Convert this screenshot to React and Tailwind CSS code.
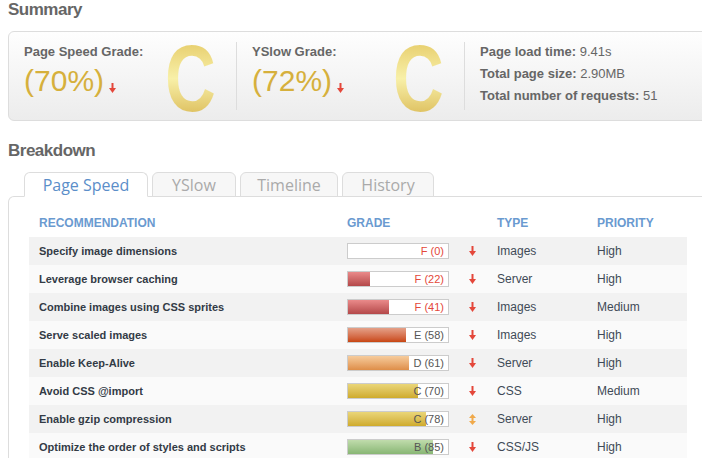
import React from "react";

const rows = [
  { name: "Specify image dimensions", grade: "F", score: 0, type: "Images", priority: "High" },
  { name: "Leverage browser caching", grade: "F", score: 22, type: "Server", priority: "High" },
  { name: "Combine images using CSS sprites", grade: "F", score: 41, type: "Images", priority: "Medium" },
  { name: "Serve scaled images", grade: "E", score: 58, type: "Images", priority: "High" },
  { name: "Enable Keep-Alive", grade: "D", score: 61, type: "Server", priority: "High" },
  { name: "Avoid CSS @import", grade: "C", score: 70, type: "CSS", priority: "Medium" },
  { name: "Enable gzip compression", grade: "C", score: 78, type: "Server", priority: "High", trend: "same" },
  { name: "Optimize the order of styles and scripts", grade: "B", score: 85, type: "CSS/JS", priority: "High" },
];

const fillStyle = {
  F: "bg-linear-to-b from-[#ea8a8a] to-[#b4484a]",
  E: "bg-linear-to-b from-[#e4a088] to-[#c8460e]",
  D: "bg-linear-to-b from-[#f6cc9c] to-[#de8e48]",
  C: "bg-linear-to-b from-[#ead678] to-[#cfab2a]",
  B: "bg-linear-to-b from-[#c0dcac] to-[#88b674]",
};

const tabs = [
  { label: "Page Speed", w: "w-[124px]", active: true },
  { label: "YSlow", w: "w-[84px]" },
  { label: "Timeline", w: "w-[98px]" },
  { label: "History", w: "w-[92px]" },
];

function DownArrow({ className = "" }) {
  return (
    <svg width="7" height="10" viewBox="0 0 7 10" className={className}>
      <rect x="2.5" y="0" width="2" height="6" fill="#e4473a" />
      <polygon points="0,5 7,5 3.5,10" fill="#e4473a" />
    </svg>
  );
}

function SameArrow() {
  return (
    <svg width="7" height="11" viewBox="0 0 7 11">
      <polygon points="0,4 7,4 3.5,0" fill="#f0a94a" />
      <rect x="2.5" y="3" width="2" height="5" fill="#f0a94a" />
      <polygon points="0,7 7,7 3.5,11" fill="#f0a94a" />
    </svg>
  );
}

function Grade({ label, pct }) {
  return (
    <div className="flex">
      <div className="w-[228px] pl-[15px] pt-[12px] flex">
        <div className="w-[141px]">
          <div className="text-[13px] leading-[16px] font-bold text-[#666]">{label}</div>
          <div className="mt-[4px] flex items-end">
            <span className="text-[30px] leading-[34px] text-[#d6b03c]">({pct}%)</span>
            <DownArrow className="ml-[5px] mb-[5px]" />
          </div>
        </div>
        <div className="w-[44px] -mt-[13px]">
          <span className="inline-block origin-left scale-x-[0.74] text-[95px] leading-none font-bold bg-linear-to-b from-[#e2c458] via-[#f8f0a8] to-[#d5b143] bg-clip-text text-transparent">
            C
          </span>
        </div>
      </div>
    </div>
  );
}

export default function App() {
  return (
    <div className="w-[702px] h-[458px] overflow-hidden bg-white font-['Liberation_Sans',Arial,sans-serif]">
      <div className="w-[710px] pl-[8px]">
        <h2 className="text-[17px] leading-[20px] font-bold tracking-[-0.5px] text-[#666]">Summary</h2>

        {/* summary box */}
        <div className="mt-[11px] h-[90px] w-[720px] flex border border-[#ddd] rounded-[6px] bg-linear-to-b from-[#fefefe] to-[#ececec]">
          <Grade label="Page Speed Grade:" pct={70} />
          <div className="w-px bg-[#ddd] my-[10px] -ml-px" />
          <Grade label="YSlow Grade:" pct={72} />
          <div className="w-px bg-[#ddd] my-[10px] -ml-px" />
          <div className="pl-[15px] pt-[9px] text-[13px] leading-[22px] text-[#666]">
            <div><b>Page load time:</b> 9.41s</div>
            <div><b>Total page size:</b> 2.90MB</div>
            <div><b>Total number of requests:</b> 51</div>
          </div>
        </div>

        <h2 className="mt-[20px] text-[17px] leading-[20px] font-bold tracking-[-0.5px] text-[#666]">Breakdown</h2>

        {/* tabs */}
        <div className="mt-[11px] flex gap-[4px] pl-[16px] relative z-10 font-['Open_Sans',sans-serif]">
          {tabs.map((t) => (
            <div
              key={t.label}
              className={`${t.w} h-[25px] flex items-center justify-center text-[16px] rounded-t-[6px] border border-[#ddd] ${
                t.active ? "bg-white border-b-white text-[#5b8ec9]" : "bg-[#f7f7f7] text-[#aaa]"
              }`}
            >
              {t.label}
            </div>
          ))}
        </div>

        {/* panel */}
        <div className="-mt-px w-[700px] border-l border-t border-r border-[#ddd] rounded-tl-[6px] px-[20px]">
          <div className="h-[40px] pt-[19px] flex text-[12px] leading-[14px] font-bold text-[#6a9ad0]">
            <div className="w-[308px] pl-[10px]">RECOMMENDATION</div>
            <div className="w-[120px] pl-[10px]">GRADE</div>
            <div className="w-[30px]" />
            <div className="w-[100px] pl-[10px]">TYPE</div>
            <div className="pl-[10px]">PRIORITY</div>
          </div>

          {rows.map((r, i) => (
            <div
              key={r.name}
              className={`h-[28px] flex items-center ${i % 2 === 0 ? "bg-[#f2f2f2]" : "bg-[#fafafa]"}`}
            >
              <div className="w-[308px] pl-[10px] text-[11px] font-bold text-[#333b46]">{r.name}</div>
              <div className="w-[120px] pl-[10px]">
                <div className="relative w-[102px] h-[16px] border border-[#ccc] bg-white">
                  <div className={`h-full ${fillStyle[r.grade]}`} style={{ width: `${r.score}px` }} />
                  <span
                    className={`absolute right-[4px] top-0 text-[11px] leading-[14px] ${
                      r.grade === "F" ? "text-[#e4483a]" : "text-[#555]"
                    }`}
                  >
                    {r.grade} ({r.score})
                  </span>
                </div>
              </div>
              <div className="w-[30px] flex justify-center">
                {r.trend === "same" ? <SameArrow /> : <DownArrow />}
              </div>
              <div className="w-[100px] pl-[10px] text-[12px] text-[#3f4a57]">{r.type}</div>
              <div className="pl-[10px] text-[12px] text-[#3f4a57]">{r.priority}</div>
            </div>
          ))}
        </div>
      </div>
    </div>
  );
}
